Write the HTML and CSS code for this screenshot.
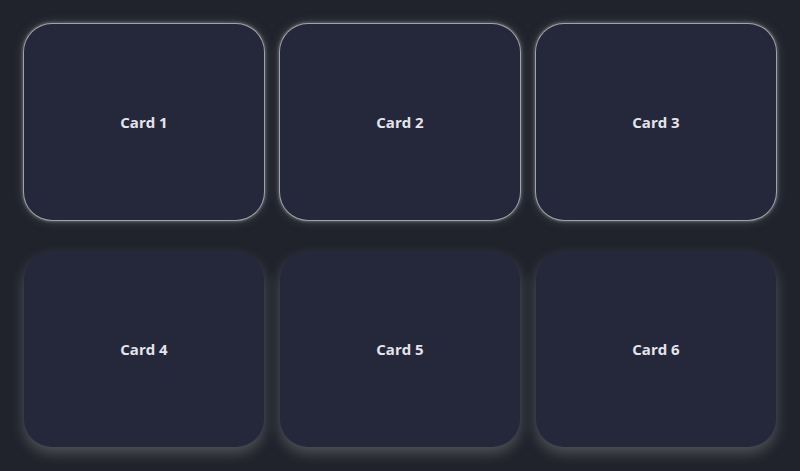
FILE: index.html
```html
<!DOCTYPE html>
<html>
<head>
<meta charset="utf-8">
<link rel="stylesheet" href="styles.css">
</head>
<body>
<div class="grid">
  <div class="card card-active">Card 1</div>
  <div class="card card-active">Card 2</div>
  <div class="card card-active">Card 3</div>
  <div class="card">Card 4</div>
  <div class="card">Card 5</div>
  <div class="card">Card 6</div>
</div>
</body>
</html>
```
FILE: styles.css
```css
html, body {
  margin: 0;
  height: 100%;
  background: #20232b;
}
.grid {
  box-sizing: border-box;
  height: 100vh;
  padding: 24px;
  display: grid;
  grid-template-columns: repeat(3, 1fr);
  grid-template-rows: repeat(2, 1fr);
  column-gap: 16px;
  row-gap: 32px;
}
.card {
  border-radius: 28px;
  background: #25273b;
  display: flex;
  align-items: center;
  justify-content: center;
  font-family: "Open Sans", sans-serif;
  font-weight: 700;
  font-size: 15px;
  color: #e4e4ea;
  box-shadow: 0 6px 14px rgba(210, 210, 215, 0.28);
}
.card-active {
  box-shadow: 0 0 0 1px rgba(180, 180, 185, 0.8), 0 0 3px 2px rgba(200, 200, 205, 0.3), 0 0 12px rgba(200, 200, 210, 0.25);
}
```
